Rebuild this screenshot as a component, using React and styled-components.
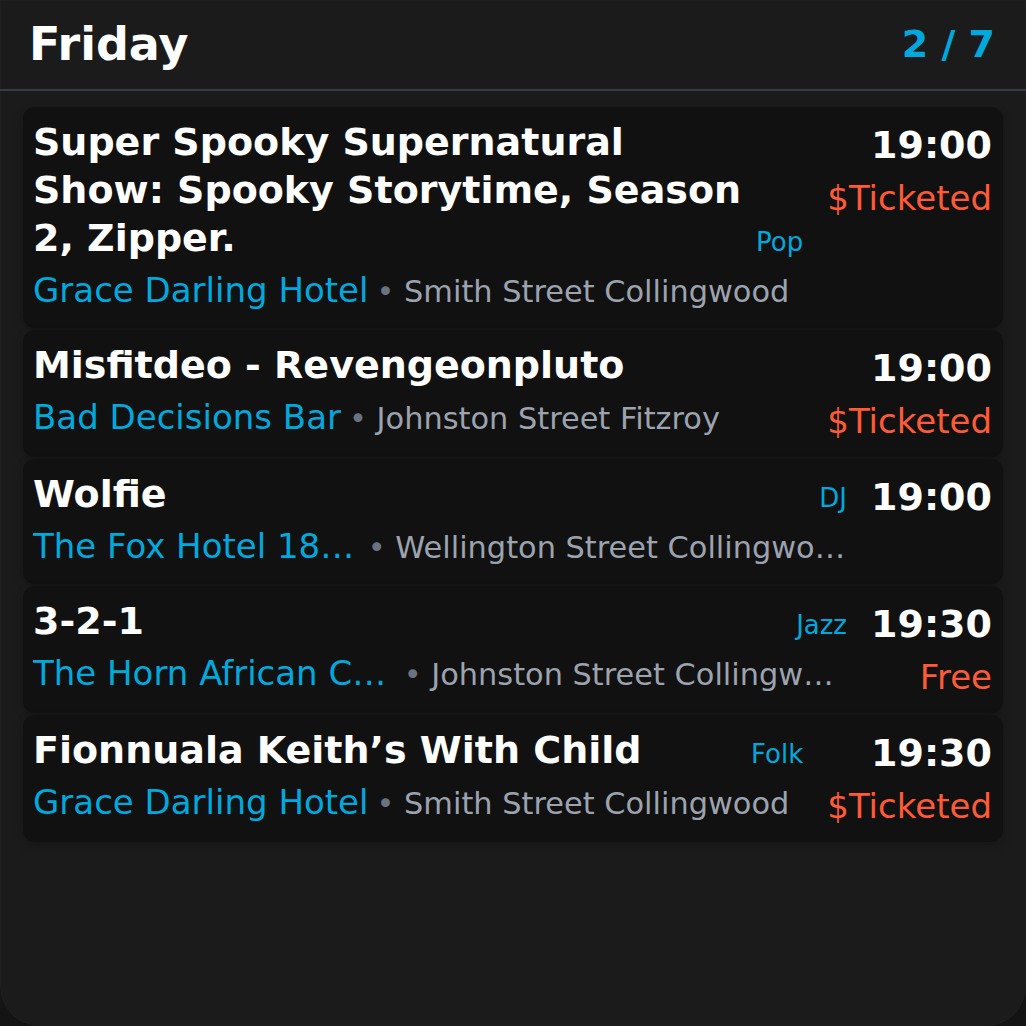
import React from "react";
import styled, { createGlobalStyle } from "styled-components";

const BLUE = "#00a9dd";
const ORANGE = "#ff5a36";

const GlobalStyle = createGlobalStyle`
  html, body {
    margin: 0;
    padding: 0;
    background: #141414;
  }
  body {
    font-family: "DejaVu Sans", "Liberation Sans", sans-serif;
  }
  * { box-sizing: border-box; }
`;

const Panel = styled.div`
  min-height: 100vh;
  background: #1b1b1b;
  border-radius: 0 0 40px 40px;
  box-shadow: inset 0 0 0 1px rgba(255, 255, 255, 0.02);
  overflow: hidden;
`;

const Header = styled.header`
  display: flex;
  justify-content: space-between;
  align-items: center;
  padding: 17px 31px 18px 29px;
  border-bottom: 2px solid #363b46;
`;

const DayTitle = styled.h1`
  margin: 0;
  font-size: 46px;
  font-weight: 700;
  line-height: normal;
  color: #ffffff;
`;

const Counter = styled.span`
  font-size: 38px;
  font-weight: 700;
  color: ${BLUE};
`;

const List = styled.div`
  display: flex;
  flex-direction: column;
  gap: 2px;
  padding: 16px 23px;
`;

const Card = styled.article`
  display: flex;
  gap: 24px;
  padding: 11px 11px 9px 10px;
  background: #111111;
  border-radius: 12px;
  box-shadow: 0 3px 10px rgba(0, 0, 0, 0.22);
`;

const Main = styled.div`
  flex: 1 1 auto;
  min-width: 0;
  display: flex;
  flex-direction: column;
`;

const TitleRow = styled.div`
  display: flex;
  align-items: last baseline;
  gap: 10px;
`;

const Title = styled.h2`
  flex: 1 1 auto;
  min-width: 0;
  margin: 0;
  font-size: 38px;
  font-weight: 700;
  line-height: 48px;
  color: #ffffff;
`;

const Genre = styled.span`
  flex: none;
  margin-left: auto;
  font-size: 26px;
  color: ${BLUE};
`;

const VenueRow = styled.div`
  display: flex;
  align-items: baseline;
  gap: 8px;
  padding-top: 1px;
  line-height: 55px;
  white-space: nowrap;
`;

const Clip = styled.span`
  flex: 0 1 auto;
  min-width: 0;
  overflow: hidden;
  text-overflow: ellipsis;
`;

const Venue = styled(Clip)`
  font-size: 34px;
  color: ${BLUE};
`;

const Address = styled(Clip)`
  font-size: 30.4px;
  color: #9ca3af;
`;

const Bullet = styled.span`
  color: #6b7280;
`;

const Side = styled.div`
  flex: none;
  display: flex;
  flex-direction: column;
  align-items: flex-end;
`;

const Time = styled.span`
  font-size: 38px;
  font-weight: 700;
  line-height: 54px;
  color: #ffffff;
`;

const Price = styled.span`
  font-size: 34px;
  line-height: 53px;
  color: ${ORANGE};
`;

const events = [
  {
    title: "Super Spooky Supernatural Show: Spooky Storytime, Season 2, Zipper.",
    genre: "Pop",
    venue: "Grace Darling Hotel",
    address: "Smith Street Collingwood",
    time: "19:00",
    price: "$Ticketed",
  },
  {
    title: "Misfitdeo - Revengeonpluto",
    venue: "Bad Decisions Bar",
    address: "Johnston Street Fitzroy",
    time: "19:00",
    price: "$Ticketed",
  },
  {
    title: "Wolfie",
    genre: "DJ",
    venue: "The Fox Hotel 1853",
    address: "Wellington Street Collingwood",
    time: "19:00",
  },
  {
    title: "3-2-1",
    genre: "Jazz",
    venue: "The Horn African Cafe",
    address: "Johnston Street Collingwood",
    time: "19:30",
    price: "Free",
  },
  {
    title: "Fionnuala Keith’s With Child",
    genre: "Folk",
    venue: "Grace Darling Hotel",
    address: "Smith Street Collingwood",
    time: "19:30",
    price: "$Ticketed",
  },
];

function EventCard({ ev }) {
  return (
    <Card>
      <Main>
        <TitleRow>
          <Title>{ev.title}</Title>
          {ev.genre && <Genre>{ev.genre}</Genre>}
        </TitleRow>
        <VenueRow>
          <Venue>{ev.venue}</Venue>
          <Address>
            <Bullet>•</Bullet> {ev.address}
          </Address>
        </VenueRow>
      </Main>
      <Side>
        <Time>{ev.time}</Time>
        {ev.price && <Price>{ev.price}</Price>}
      </Side>
    </Card>
  );
}

export default function App() {
  return (
    <>
      <GlobalStyle />
      <Panel>
        <Header>
          <DayTitle>Friday</DayTitle>
          <Counter>2 / 7</Counter>
        </Header>
        <List>
          {events.map((ev, i) => (
            <EventCard key={i} ev={ev} />
          ))}
        </List>
      </Panel>
    </>
  );
}
